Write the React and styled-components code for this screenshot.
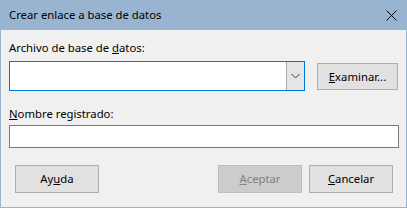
import React from 'react'
import styled, { createGlobalStyle } from 'styled-components'

const Global = createGlobalStyle`
    html, body {
        margin: 0;
        padding: 0;
        background: #f0f0f0;
    }
    * {
        box-sizing: border-box;
    }
`;

const Window = styled.div`
    width: 407px;
    height: 208px;
    display: flex;
    flex-direction: column;
    font-family: "Segoe UI", "Noto Sans", "Liberation Sans", sans-serif;
    font-size: 11.3px;
    color: #000;
`;

const TitleBar = styled.div`
    height: 30px;
    background: #99b4d1;
    display: flex;
    align-items: center;
    justify-content: space-between;
    padding: 0 10px 0 9px;
`;

const Title = styled.span`
    line-height: 16px;
`;

const Body = styled.div`
    flex: 1;
    background: #f0f0f0;
    border: 1px solid #99b4d1;
    border-top: none;
    padding: 10px 7px 0 8px;
    display: flex;
    flex-direction: column;
`;

const Label = styled.div`
    line-height: 16px;
    height: 16px;
    margin-top: ${p => p.$top || 0}px;
    margin-bottom: ${p => p.$gap}px;
`;

const Row = styled.div`
    display: flex;
    align-items: flex-start;
    gap: 12px;
`;

const Combo = styled.div`
    width: 296px;
    height: 30px;
    background: #fff;
    border: 1px solid #0078d7;
    display: flex;
    justify-content: flex-end;
`;

const DropButton = styled.div`
    width: 18px;
    height: 28px;
    background: #e5e5e5;
    border-left: 1px solid #acacac;
    display: flex;
    align-items: center;
    justify-content: center;
`;

const Button = styled.div`
    width: ${p => p.$w}px;
    height: ${p => p.$h}px;
    margin-top: ${p => p.$top || 0}px;
    background: ${p => p.$disabled ? '#cccccc' : '#e1e1e1'};
    border: 1px solid ${p => p.$disabled ? '#bfbfbf' : '#adadad'};
    color: ${p => p.$disabled ? '#838383' : '#000'};
    display: flex;
    align-items: center;
    justify-content: center;
    line-height: 16px;
`;

const TextField = styled.div`
    width: 390px;
    height: 23px;
    background: #fff;
    border: 1px solid #7a7a7a;
    margin-bottom: 17px;
`;

const Footer = styled.div`
    display: flex;
    align-items: center;
    padding: 0 6px 0 6px;
    gap: 7px;
`;

const Spacer = styled.div`
    flex: 1;
`;

export default function App() {
    return (
        <Window>
            <Global />
            <TitleBar>
                <Title>Crear enlace a base de datos</Title>
                <svg width="11" height="11" viewBox="0 0 11 11">
                    <path d="M0.5 0.5 L10.5 10.5 M10.5 0.5 L0.5 10.5" stroke="#000" strokeWidth="1" fill="none" />
                </svg>
            </TitleBar>
            <Body>
                <Label $gap={5}>Archivo de base de <u>d</u>atos:</Label>
                <Row>
                    <Combo>
                        <DropButton>
                            <svg width="9" height="6" viewBox="0 0 9 6">
                                <path d="M0.5 1 L4.5 5 L8.5 1" stroke="#404040" strokeWidth="1" fill="none" />
                            </svg>
                        </DropButton>
                    </Combo>
                    <Button $w={81} $h={27} $top={2}><u>E</u>xaminar...</Button>
                </Row>
                <Label $top={15} $gap={3}><u>N</u>ombre registrado:</Label>
                <TextField />
                <Footer>
                    <Button $w={84} $h={28}>Ay<u>u</u>da</Button>
                    <Spacer />
                    <Button $w={84} $h={28} $disabled><u>A</u>ceptar</Button>
                    <Button $w={84} $h={28}><u>C</u>ancelar</Button>
                </Footer>
            </Body>
        </Window>
    )
}
